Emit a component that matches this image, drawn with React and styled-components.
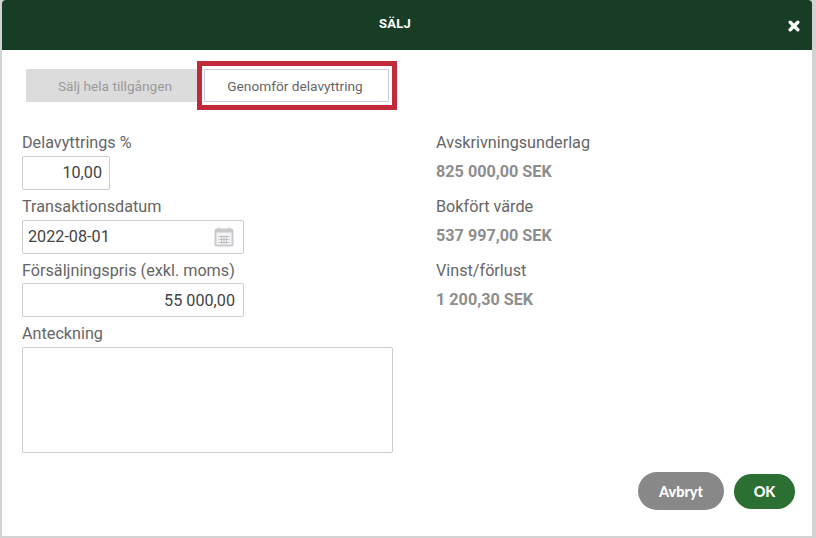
import styled, { createGlobalStyle } from "styled-components";

const GlobalStyle = createGlobalStyle`
  html, body {
    margin: 0;
    height: 100%;
    background: #d2d2d2;
  }
  * { box-sizing: border-box; }
`;

export default function App() {
  return (
    <>
      <GlobalStyle />
      <Modal>
        <Header>
          <Title>SÄLJ</Title>
          <CloseButton aria-label="Stäng">
            <svg width="12" height="12" viewBox="0 0 12 12">
              <path d="M2.2 2.2l7.6 7.6M9.8 2.2l-7.6 7.6" stroke="#fff" strokeWidth="3.4" strokeLinecap="round" />
            </svg>
          </CloseButton>
        </Header>

        <Tabs>
          <Tab>Sälj hela tillgången</Tab>
          <Highlight>
            <Tab $active>Genomför delavyttring</Tab>
          </Highlight>
        </Tabs>

        <Columns>
          <LeftColumn>
            <Field>
              <Label>Delavyttrings %</Label>
              <InputBox $width={88} $right $inset={7}>10,00</InputBox>
            </Field>
            <Field>
              <Label>Transaktionsdatum</Label>
              <InputBox $width={222}>
                2022-08-01
                <CalendarIcon />
              </InputBox>
            </Field>
            <Field>
              <Label>Försäljningspris (exkl. moms)</Label>
              <InputBox $width={222} $right>55 000,00</InputBox>
            </Field>
            <Field>
              <Label>Anteckning</Label>
              <NoteBox />
            </Field>
          </LeftColumn>

          <RightColumn>
            <Stat>
              <StatLabel>Avskrivningsunderlag</StatLabel>
              <StatValue>825 000,00 SEK</StatValue>
            </Stat>
            <Stat>
              <StatLabel>Bokfört värde</StatLabel>
              <StatValue>537 997,00 SEK</StatValue>
            </Stat>
            <Stat>
              <StatLabel>Vinst/förlust</StatLabel>
              <StatValue>1 200,30 SEK</StatValue>
            </Stat>
          </RightColumn>
        </Columns>

        <Footer>
          <CancelButton>Avbryt</CancelButton>
          <OkButton>OK</OkButton>
        </Footer>
      </Modal>
    </>
  );
}

function CalendarIcon() {
  return (
    <CalendarSvg width="20" height="20" viewBox="0 0 20 20" fill="none">
      <rect x="0.5" y="1.5" width="19" height="18" rx="2.5" fill="#c9c9ce" />
      <rect x="2.5" y="5.5" width="15" height="12" fill="#f4f4f4" />
      <path d="M5 0.5v3M15 0.5v3" stroke="#c9c9ce" strokeWidth="1.6" />
      <path d="M4.5 9.5h11M4.5 12.5h11M4.5 15.5h11M7.5 8.5v8M10 8.5v8M12.5 8.5v8" stroke="#c0c0c6" strokeWidth="1" />
    </CalendarSvg>
  );
}

// ─── Styled Components ───────────────────────────────────────

const Modal = styled.div`
  width: 810px;
  height: 536px;
  margin-left: 2px;
  background: #fff;
  border-radius: 4px 4px 0 0;
  display: flex;
  flex-direction: column;
  font-family: Roboto, "Liberation Sans", sans-serif;
  overflow: hidden;
`;

const Header = styled.header`
  position: relative;
  height: 50px;
  flex: none;
  background: #173d27;
  display: flex;
  align-items: center;
  justify-content: center;
  padding: 0 24px 3px 0;
`;

const Title = styled.h1`
  margin: 0;
  color: #fff;
  font-size: 13px;
  font-weight: 700;
  letter-spacing: 0.2px;
`;

const CloseButton = styled.button`
  position: absolute;
  right: 12px;
  top: 20px;
  display: flex;
  padding: 0;
  border: none;
  background: none;
`;

const Tabs = styled.div`
  display: flex;
  align-items: center;
  padding: 11px 0 0 24px;
`;

const Tab = styled.div`
  width: ${(p) => (p.$active ? "185px" : "171px")};
  height: 33px;
  display: flex;
  align-items: center;
  justify-content: center;
  padding: ${(p) => (p.$active ? "0 3px 0 0" : "0 0 0 7px")};
  font-size: 13.7px;
  color: ${(p) => (p.$active ? "#666" : "#999")};
  background: ${(p) => (p.$active ? "#fff" : "#dcdcdc")};
  border: ${(p) => (p.$active ? "1px solid #ccd" : "none")};
`;

const Highlight = styled.div`
  width: 200px;
  height: 49px;
  border: 5px solid #c12a3a;
  display: flex;
  align-items: center;
  padding-left: 2px;
`;

const Columns = styled.div`
  display: flex;
  padding: 21.33px 0 0 20px;
`;

const LeftColumn = styled.div`
  width: 414px;
  display: flex;
  flex-direction: column;
  gap: 5px;
`;

const Field = styled.div`
  display: flex;
  flex-direction: column;
  gap: 3px;
`;

const Label = styled.label`
  height: 21.67px;
  line-height: 24.4px;
  font-size: 16.2px;
  color: #666;
`;

const InputBox = styled.div`
  width: ${(p) => p.$width}px;
  height: 34px;
  flex: none;
  display: flex;
  align-items: center;
  justify-content: ${(p) => (p.$right ? "flex-end" : "space-between")};
  padding: 0 ${(p) => p.$inset ?? 8}px 0 5px;
  font-size: 16.2px;
  color: #444;
  border: 1px solid #ccc;
  border-radius: 2px;
`;

const CalendarSvg = styled.svg`
  margin-right: 1px;
`;

const NoteBox = styled.div`
  width: 371px;
  height: 106px;
  border: 1px solid #ccc;
  border-radius: 2px;
`;

const RightColumn = styled.div`
  display: flex;
  flex-direction: column;
  gap: 15px;
  padding-top: 2px;
`;

const Stat = styled.div`
  display: flex;
  flex-direction: column;
  gap: 9px;
`;

const StatLabel = styled.div`
  height: 20px;
  line-height: 20px;
  font-size: 16.2px;
  color: #666;
`;

const StatValue = styled.div`
  height: 20px;
  line-height: 20px;
  font-size: 16.2px;
  font-weight: 700;
  color: #8e8e8e;
`;

const Footer = styled.footer`
  margin-top: auto;
  padding: 0 17px 26px 0;
  display: flex;
  justify-content: flex-end;
  align-items: center;
  gap: 10px;
`;

const PillButton = styled.button`
  border: none;
  border-radius: 20px;
  color: #fff;
  font-family: Lato, Roboto, sans-serif;
  font-size: 14.4px;
  font-weight: 900;
`;

const CancelButton = styled(PillButton)`
  width: 86px;
  height: 38px;
  background: #888;
`;

const OkButton = styled(PillButton)`
  width: 61px;
  height: 35px;
  background: #2b6f32;
`;
